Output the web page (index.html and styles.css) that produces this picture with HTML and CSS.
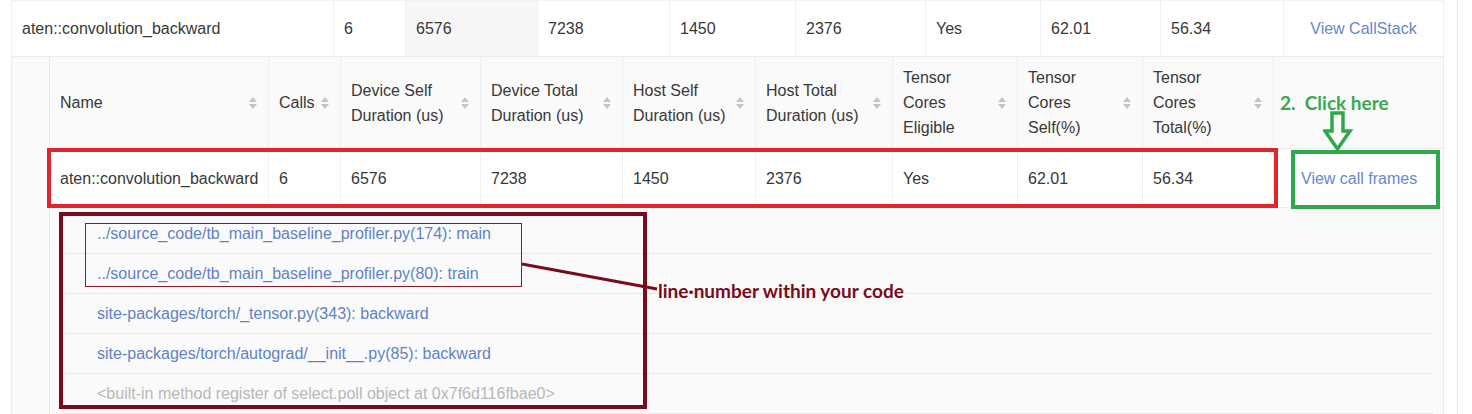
FILE: index.html
```html
<!DOCTYPE html>
<html>
<head>
<meta charset="utf-8">
<link rel="stylesheet" href="styles.css">
</head>
<body>
<div class="page">
  <table class="outer">
    <colgroup>
      <col style="width:322px"><col style="width:72px"><col style="width:132px"><col style="width:132px"><col style="width:126px"><col style="width:130px"><col style="width:115px"><col style="width:120px"><col style="width:123px"><col style="width:160px">
    </colgroup>
    <tbody>
      <tr class="main">
        <td class="first">aten::convolution_backward</td>
        <td>6</td>
        <td class="sorted">6576</td>
        <td>7238</td>
        <td>1450</td>
        <td>2376</td>
        <td>Yes</td>
        <td>62.01</td>
        <td>56.34</td>
        <td class="center"><a class="link">View CallStack</a></td>
      </tr>
      <tr class="expanded">
        <td colspan="10">
          <table class="inner">
            <colgroup>
              <col style="width:219px"><col style="width:72px"><col style="width:140px"><col style="width:142px"><col style="width:133px"><col style="width:137px"><col style="width:125px"><col style="width:125px"><col style="width:131px"><col style="width:170px">
            </colgroup>
            <thead>
              <tr>
                <th><div class="th"><span>Name</span><i class="sorter"></i></div></th>
                <th><div class="th"><span>Calls</span><i class="sorter"></i></div></th>
                <th><div class="th"><span>Device Self<br>Duration (us)</span><i class="sorter"></i></div></th>
                <th><div class="th"><span>Device Total<br>Duration (us)</span><i class="sorter"></i></div></th>
                <th><div class="th"><span>Host Self<br>Duration (us)</span><i class="sorter"></i></div></th>
                <th><div class="th"><span>Host Total<br>Duration (us)</span><i class="sorter"></i></div></th>
                <th><div class="th"><span>Tensor<br>Cores<br>Eligible</span><i class="sorter"></i></div></th>
                <th><div class="th"><span>Tensor<br>Cores<br>Self(%)</span><i class="sorter"></i></div></th>
                <th><div class="th"><span>Tensor<br>Cores<br>Total(%)</span><i class="sorter"></i></div></th>
                <th></th>
              </tr>
            </thead>
            <tbody>
              <tr class="data">
                <td>aten::convolution_backward</td>
                <td>6</td>
                <td>6576</td>
                <td>7238</td>
                <td>1450</td>
                <td>2376</td>
                <td>Yes</td>
                <td>62.01</td>
                <td>56.34</td>
                <td class="last"><a class="link">View call frames</a></td>
              </tr>
              <tr class="frames-row">
                <td colspan="10">
                  <ul class="frames">
                    <li class="link">../source_code/tb_main_baseline_profiler.py(174): main</li>
                    <li class="link">../source_code/tb_main_baseline_profiler.py(80): train</li>
                    <li class="link">site-packages/torch/_tensor.py(343): backward</li>
                    <li class="link">site-packages/torch/autograd/__init__.py(85): backward</li>
                    <li class="muted">&lt;built-in method register of select.poll object at 0x7f6d116fbae0&gt;</li>
                  </ul>
                </td>
              </tr>
            </tbody>
          </table>
        </td>
      </tr>
    </tbody>
  </table>

  <div class="red-box"></div>
  <div class="green-box"></div>
  <div class="maroon-box"></div>
  <div class="thin-box"></div>
  <svg class="connector" width="140" height="32" viewBox="0 0 140 32"><line x1="1" y1="3" x2="136" y2="28" stroke="#7b0a1c" stroke-width="3"/></svg>
  <div class="note">line·number within your code</div>
  <div class="click">2.  Click here</div>
  <svg class="arrow" width="30" height="42" viewBox="0 0 30 42"><path d="M9 2 H20 V20 H27 L14.5 38 L2 20 H9 Z" fill="none" stroke="#2ea84b" stroke-width="3.5" stroke-linejoin="miter"/></svg>
</div>
</body>
</html>
```

FILE: styles.css
```css
html, body {
  margin: 0;
  padding: 0;
  background: #fff;
}
body {
  font-family: "Liberation Sans", Arial, sans-serif;
  font-size: 16px;
  color: #383838;
}
.page {
  position: relative;
  width: 1457px;
  height: 414px;
  border-right: 1px solid #e6e6e6;
  overflow: hidden;
}
.outer {
  margin-left: 11px;
  width: 1432px;
  table-layout: fixed;
  border-collapse: collapse;
}
.main > td {
  height: 55px;
  padding: 0 10px;
  line-height: 25px;
  background: #fff;
  border-bottom: 1px solid #ebebeb;
  border-right: 1px solid #f0f0f0;
  border-top: 1px solid #f2f2f2;
  white-space: nowrap;
}
.main > td.first {
  padding-left: 10px;
  border-left: 1px solid #efefef;
}
.main > td.sorted {
  background: #f7f7f7;
}
.main > td.center {
  text-align: center;
}
.link {
  color: #6688cc;
  text-decoration: none;
}
.expanded > td {
  padding: 0 0 0 37px;
  background: #fafafa;
  border-left: 1px solid #ececec;
  border-right: 1px solid #ececec;
}
.inner {
  width: 1394px;
  table-layout: fixed;
  border-collapse: collapse;
  border-left: 1px solid #e6e6e6;
}
.inner th {
  background: #fafafa;
  font-weight: normal;
  text-align: left;
  padding: 8px 11px 8px 10px;
  line-height: 25px;
  height: 75px;
  border-right: 1px solid #efefef;
  border-bottom: 1px solid #e8e8e8;
  color: #383838;
}
.inner th:last-child {
  border-right: none;
}
.th {
  display: flex;
  align-items: center;
  justify-content: space-between;
}
.sorter {
  display: block;
  width: 8px;
  height: 12px;
  flex: none;
  position: relative;
}
.sorter::before,
.sorter::after {
  content: "";
  position: absolute;
  left: 0;
  border-left: 4px solid transparent;
  border-right: 4px solid transparent;
}
.sorter::before {
  top: 0;
  border-bottom: 5px solid #c4c4c4;
}
.sorter::after {
  bottom: 0;
  border-top: 5px solid #c4c4c4;
}
.data > td {
  background: #fff;
  height: 58px;
  padding: 0 11px 0 10px;
  line-height: 25px;
  border-right: 1px solid #f0f0f0;
  border-bottom: 1px solid #ececec;
  white-space: nowrap;
}
.data > td.last {
  padding-left: 27px;
  border-right: none;
}
.frames-row > td {
  padding: 6px 11px 0 14px;
  background: #fafafa;
}
.frames {
  list-style: none;
  margin: 0;
  padding: 0;
}
.frames li {
  height: 39px;
  line-height: 39px;
  padding-left: 33px;
  border-bottom: 1px solid #e9e9e9;
  white-space: nowrap;
}
.frames li.link {
  color: #5f82c6;
}
.frames li.muted {
  color: #b8b8b8;
}
.red-box,
.green-box,
.maroon-box,
.thin-box {
  position: absolute;
  box-sizing: border-box;
}
.red-box {
  left: 47px;
  top: 148px;
  width: 1231px;
  height: 60px;
  border: 4px solid #e0252d;
}
.green-box {
  left: 1291px;
  top: 150px;
  width: 149px;
  height: 59px;
  border: 4px solid #2ea84b;
}
.maroon-box {
  left: 59px;
  top: 212px;
  width: 588px;
  height: 197px;
  border: 4px solid #7b0a1c;
}
.thin-box {
  left: 85px;
  top: 223px;
  width: 437px;
  height: 64px;
  border: 1px solid #8a1a2a;
}
.connector {
  position: absolute;
  left: 521px;
  top: 261px;
}
.note {
  position: absolute;
  left: 658px;
  top: 280px;
  font-family: Lato, "Open Sans", sans-serif;
  font-weight: bold;
  font-size: 19px;
  line-height: 22px;
  color: #7b0a1c;
  white-space: nowrap;
}
.click {
  position: absolute;
  left: 1280px;
  top: 92px;
  font-family: Lato, "Open Sans", sans-serif;
  font-weight: bold;
  font-size: 19px;
  line-height: 22px;
  color: #38a852;
  white-space: pre;
}
.arrow {
  position: absolute;
  left: 1323px;
  top: 111px;
}
```
